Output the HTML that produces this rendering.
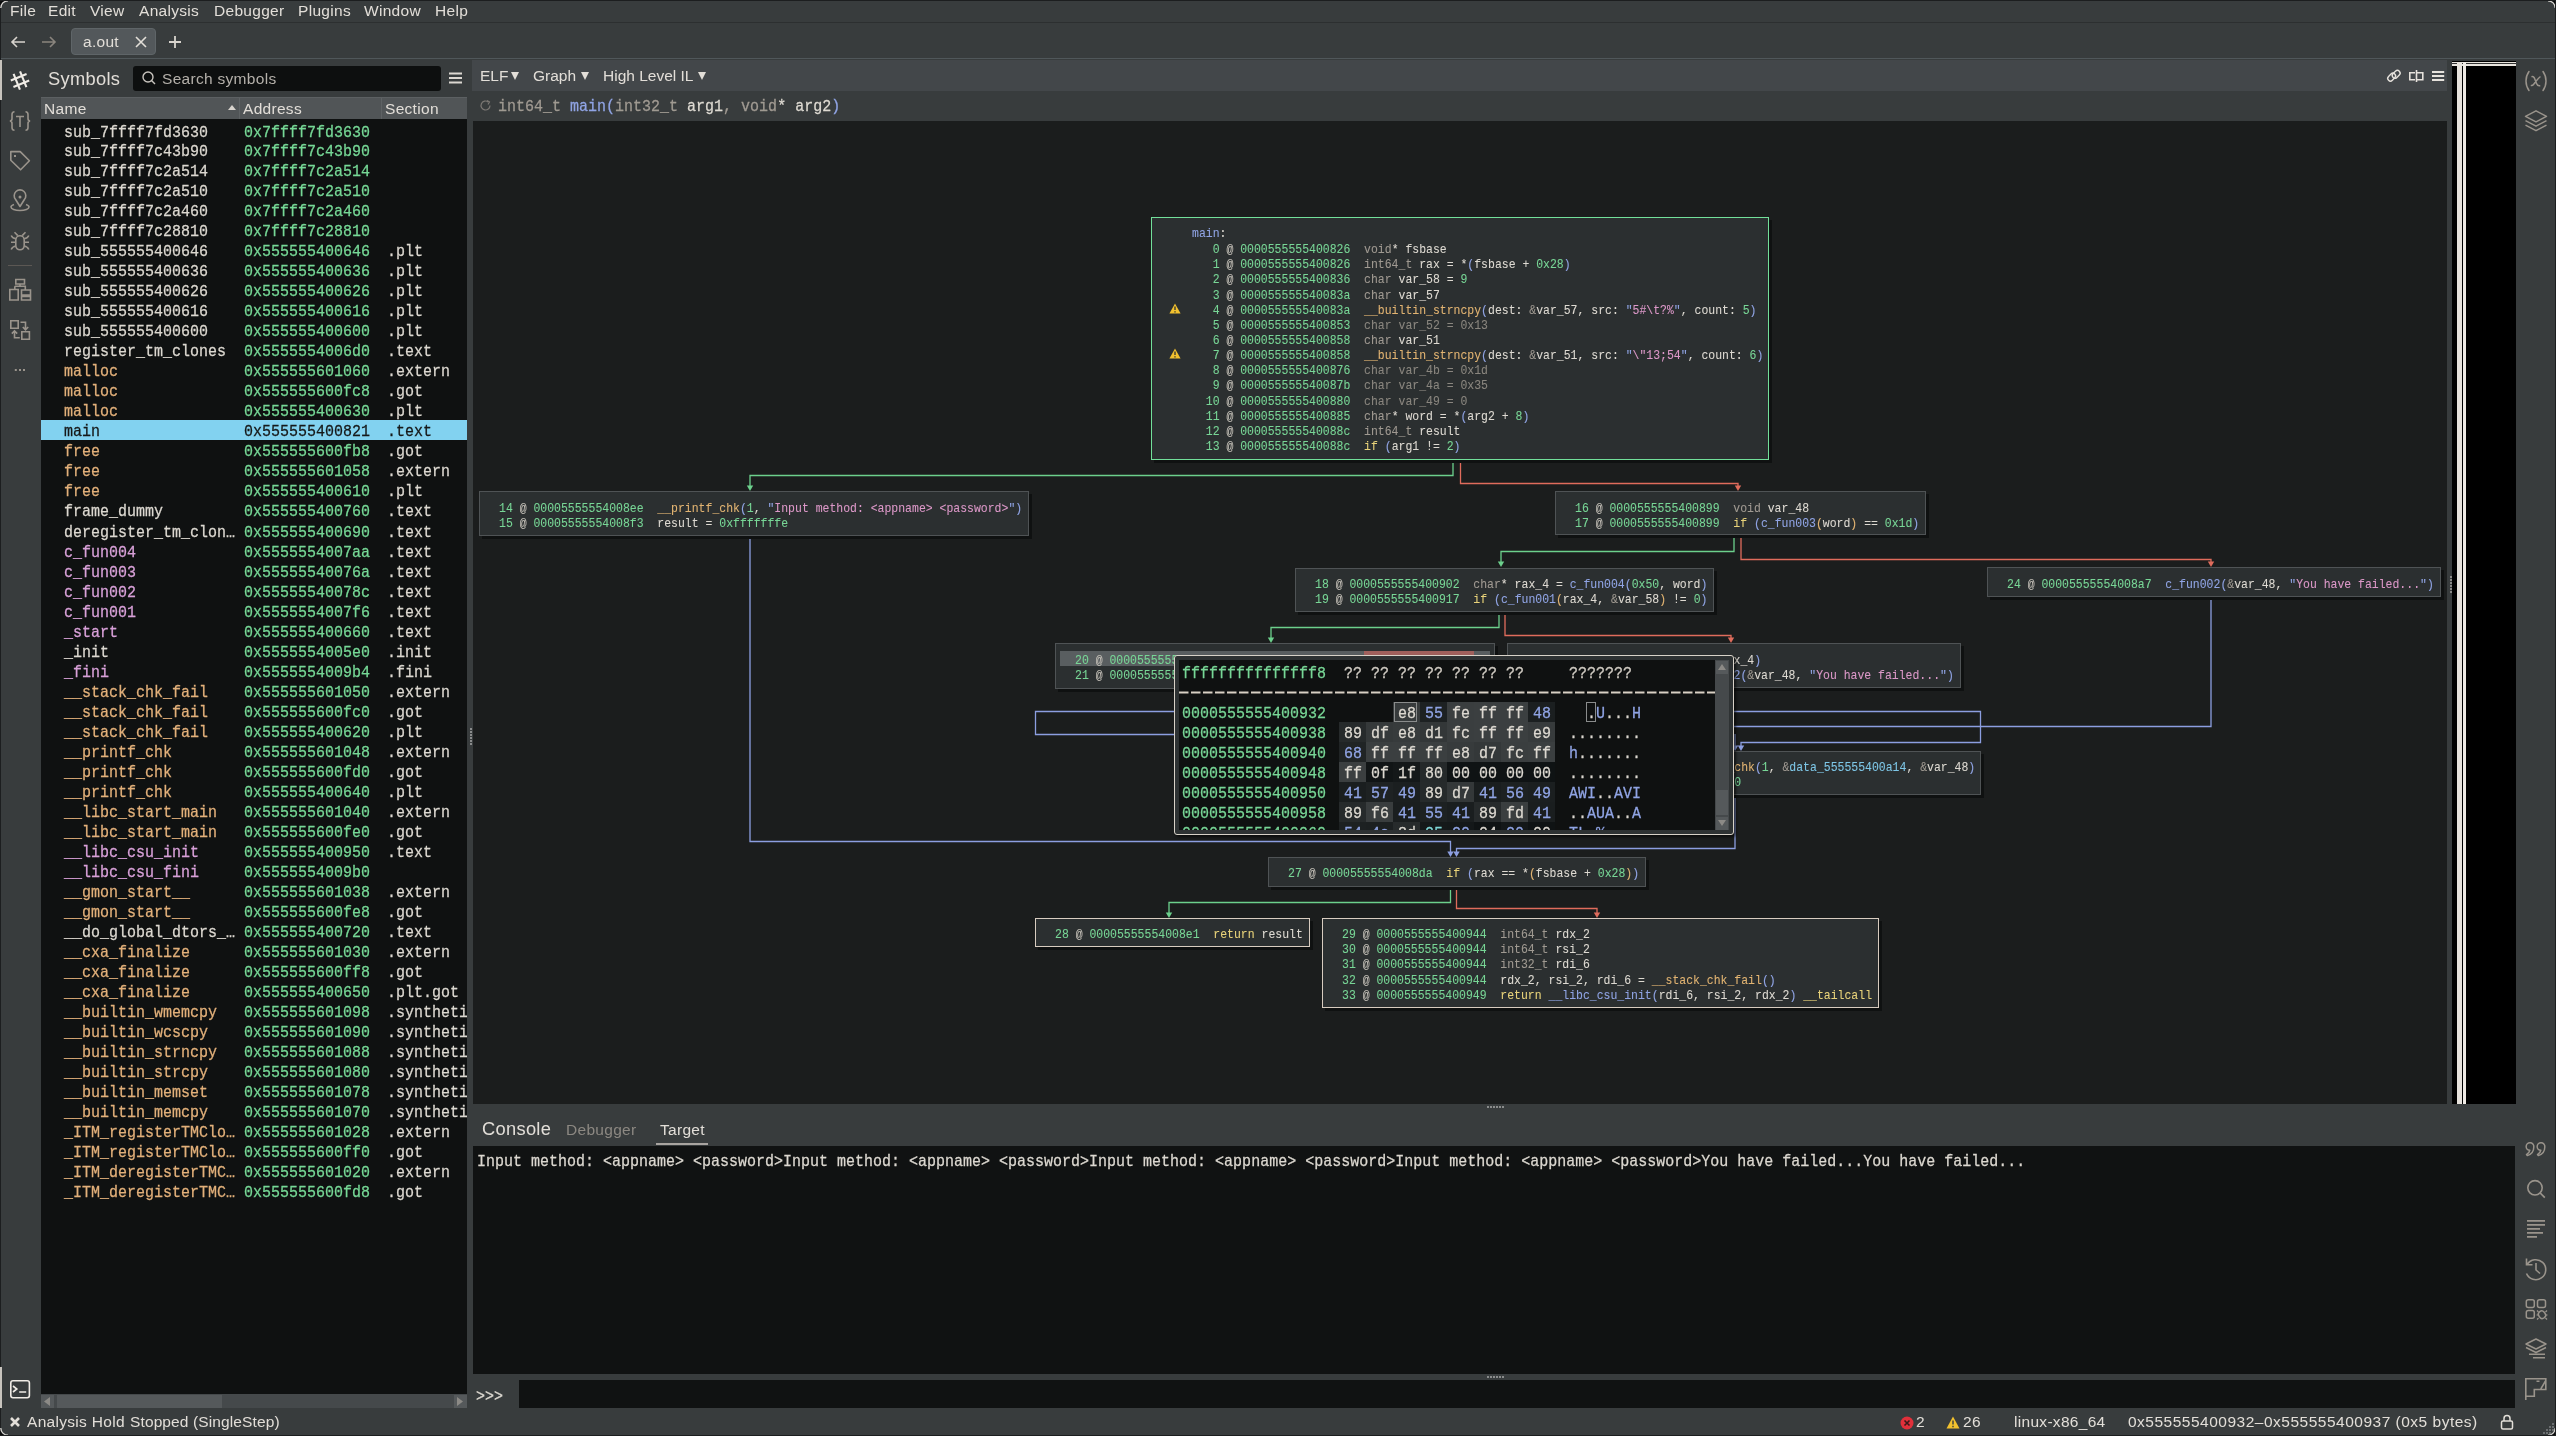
<!DOCTYPE html><html><head><meta charset="utf-8"><style>
*{box-sizing:border-box}
html,body{margin:0;padding:0;width:2556px;height:1436px;overflow:hidden;background:#0b0c0c}
.a{position:absolute}
.s{font-family:"Liberation Sans", sans-serif;white-space:pre}
.m{font-family:"Liberation Mono", monospace;white-space:pre}
#win{position:absolute;left:0;top:0;width:2556px;height:1436px;background:#383c3d;overflow:hidden}
.sym{position:absolute;left:0;width:426px;height:20px;line-height:25px;font-size:15px;font-family:"Liberation Mono", monospace;white-space:pre;color:#dcd8d0}
.sym span{position:absolute;top:0}
.blk{position:absolute;background:#2b2f30;border:1px solid #4f5355;box-shadow:3px 3px 0 #0f1111}
.gl{position:absolute;left:0;height:15.15px;line-height:15.15px;font-size:11.47px;font-family:"Liberation Mono", monospace;white-space:pre;color:#dedad2}
.n{color:#78d696} .at{color:#c4c0b8} .t{color:#a09a92} .f{color:#e2b472} .st{color:#dc98c8}
.k{color:#e8d27a}
body{will-change:transform} .s,.m,.sym,.gl{will-change:transform} .sym,.m{-webkit-text-stroke:0.25px currentColor} .gl{-webkit-text-stroke:0.08px currentColor} .sym span{transform:scaleY(1.1);transform-origin:0 11px} .m{transform:scaleY(1.1);transform-origin:0 9px} .gl{transform:scaleY(1.15);transform-origin:0 6.9px} .p{color:#90a4e4} .d{color:#8a867f} .c{color:#7ec6e6} .w{color:#dedad2}
</style></head><body><div id="win">
<div class="a s" style="left:10px;top:1px;font-size:15.5px;letter-spacing:0.3px;line-height:20px;color:#e2ded8">File</div>
<div class="a s" style="left:48px;top:1px;font-size:15.5px;letter-spacing:0.3px;line-height:20px;color:#e2ded8">Edit</div>
<div class="a s" style="left:90px;top:1px;font-size:15.5px;letter-spacing:0.3px;line-height:20px;color:#e2ded8">View</div>
<div class="a s" style="left:139px;top:1px;font-size:15.5px;letter-spacing:0.3px;line-height:20px;color:#e2ded8">Analysis</div>
<div class="a s" style="left:214px;top:1px;font-size:15.5px;letter-spacing:0.3px;line-height:20px;color:#e2ded8">Debugger</div>
<div class="a s" style="left:298px;top:1px;font-size:15.5px;letter-spacing:0.3px;line-height:20px;color:#e2ded8">Plugins</div>
<div class="a s" style="left:364px;top:1px;font-size:15.5px;letter-spacing:0.3px;line-height:20px;color:#e2ded8">Window</div>
<div class="a s" style="left:435px;top:1px;font-size:15.5px;letter-spacing:0.3px;line-height:20px;color:#e2ded8">Help</div>
<div class="a" style="left:0;top:22px;width:2556px;height:1px;background:#2c2f30"></div>
<svg class="a" style="left:9px;top:34px" width="18" height="16" viewBox="0 0 18 16"><path d="M16 8H3M8 3L3 8L8 13" stroke="#d8d4ce" stroke-width="1.6" fill="none"/></svg>
<svg class="a" style="left:40px;top:34px" width="18" height="16" viewBox="0 0 18 16"><path d="M2 8H15M10 3L15 8L10 13" stroke="#8a857e" stroke-width="1.6" fill="none"/></svg>
<div class="a" style="left:71px;top:28px;width:85px;height:27px;background:#53585b;border:1px solid #5f6568;border-radius:4px"></div>
<div class="a s" style="left:83px;top:32px;font-size:15.5px;letter-spacing:0.3px;line-height:20px;color:#e2ded8">a.out</div>
<svg class="a" style="left:134px;top:35px" width="14" height="14" viewBox="0 0 14 14"><path d="M2 2L12 12M12 2L2 12" stroke="#e2ded8" stroke-width="1.6"/></svg>
<svg class="a" style="left:168px;top:35px" width="14" height="14" viewBox="0 0 14 14"><path d="M7 1V13M1 7H13" stroke="#d8d4ce" stroke-width="1.8"/></svg>
<div class="a" style="left:0;top:58px;width:2556px;height:1px;background:#50575a"></div>
<div class="a" style="left:0;top:0;width:1px;height:1436px;background:#1c1e1f"></div>
<div class="a" style="left:0;top:60px;width:2px;height:40px;background:#c8c4be"></div>
<div class="a" style="left:0;top:1367px;width:2px;height:41px;background:#c8c4be"></div>
<svg class="a" style="left:0;top:0" width="40" height="1436"><g transform="rotate(-22 20 80.5)" stroke="#f0ece6" stroke-width="2.1" fill="none"><path d="M16.5 72V89M23.5 72V89M11.5 77H28.5M11.5 84H28.5"/></g><path d="M14.5 111.8C12.5 111.8 12 112.8 12 114.5V118.5C12 120 11.2 121 9.8 121C11.2 121 12 122 12 123.5V127.5C12 129.2 12.5 130.2 14.5 130.2M25.5 111.8C27.5 111.8 28 112.8 28 114.5V118.5C28 120 28.8 121 30.2 121C28.8 121 28 122 28 123.5V127.5C28 129.2 27.5 130.2 25.5 130.2M16 116.5H24M20 116.5V127" stroke="#9a948c" stroke-width="1.6" fill="none"/><path d="M10.8 151.6H20.2L29.4 160.8L20.6 169.8L10.8 160.2Z" stroke="#9a948c" stroke-width="1.6" fill="none" stroke-linejoin="round"/><rect x="14" y="155" width="2" height="2" fill="#9a948c"/><path d="M20 206.5L15.6 199.5A5.8 5.8 0 1 1 24.4 199.5Z" stroke="#9a948c" stroke-width="1.6" fill="none" stroke-linejoin="round"/><circle cx="20" cy="197" r="1.5" fill="#9a948c"/><path d="M14 204.5C11.5 205.3 11 206.2 11 207C11 209 15 210.5 20 210.5C25 210.5 29 209 29 207C29 206.2 28.5 205.3 26 204.5" stroke="#9a948c" stroke-width="1.6" fill="none"/><rect x="15.8" y="235.8" width="8.4" height="14" rx="4.2" stroke="#9a948c" stroke-width="1.6" fill="none"/><path d="M14.5 232.2L17.8 235.6M25.5 232.2L22.2 235.6M11.2 235.5C12 237.5 13.5 238.3 15.8 238.8M28.8 235.5C28 237.5 26.5 238.3 24.2 238.8M11 242.3H15.8M24.2 242.3H29M11.2 249.5C12 247.5 13.5 246.5 15.8 246M28.8 249.5C28 247.5 26.5 246.5 24.2 246" stroke="#9a948c" stroke-width="1.6" fill="none"/><path d="M8 265.5H32" stroke="#5c5854" stroke-width="1"/><path d="M15.8 279.5H24.5V284H15.8ZM20 284V286.3M14.8 286.3H25.3V289.5M14.8 286.3V289.5M9.8 289.5H18.2V300H9.8ZM21.5 290H30.5V295H21.5ZM21.5 296.5H30.5V300H21.5Z" stroke="#9a948c" stroke-width="1.6" fill="none"/><path d="M10.8 320.8H18.2V328.2H10.8ZM21.8 331.8H29.4V339.2H21.8ZM20.5 322.3H25.5V329M22.8 327L25.5 329.8L28.2 327M19.8 337.8H14.5V331.5M11.8 333.6L14.5 330.8L17.2 333.6" stroke="#9a948c" stroke-width="1.6" fill="none"/><rect x="14.8" y="369" width="2" height="2" fill="#9a948c"/><rect x="19" y="369" width="2" height="2" fill="#9a948c"/><rect x="23" y="369" width="2" height="2" fill="#9a948c"/><rect x="10.8" y="1380.8" width="18.6" height="17" rx="2.2" stroke="#f0ece6" stroke-width="1.6" fill="none"/><path d="M13 1386L16.8 1389L13 1392M19.2 1392H26.2" stroke="#f0ece6" stroke-width="1.6" fill="none"/></svg>
<div class="a s" style="left:48px;top:68px;font-size:18.3px;letter-spacing:0.3px;line-height:22px;color:#e2ded8">Symbols</div>
<div class="a" style="left:133px;top:66px;width:308px;height:25px;background:#0d0f0f;border-radius:3px"></div>
<svg class="a" style="left:141px;top:70px" width="16" height="16" viewBox="0 0 16 16"><circle cx="7" cy="7" r="5" stroke="#c8c4be" stroke-width="1.4" fill="none"/><path d="M10.5 10.5L14 14" stroke="#c8c4be" stroke-width="1.4"/></svg>
<div class="a s" style="left:162px;top:69px;font-size:15.5px;letter-spacing:0.3px;line-height:20px;color:#b4b0aa">Search symbols</div>
<svg class="a" style="left:449px;top:72px" width="13" height="12" viewBox="0 0 13 12"><path d="M0 1.5H13M0 6H13M0 10.5H13" stroke="#dcd8d2" stroke-width="1.8"/></svg>
<div class="a" style="left:41px;top:97px;width:426px;height:22px;background:#515557;border-top:1px solid #5c6062"></div>
<div class="a s" style="left:44px;top:99px;font-size:15.5px;letter-spacing:0.3px;line-height:20px;color:#e2ded8">Name</div>
<svg class="a" style="left:228px;top:105px" width="8" height="5" viewBox="0 0 8 5"><path d="M0 5L4 0L8 5Z" fill="#d8d4ce"/></svg>
<div class="a" style="left:239px;top:98px;width:1px;height:21px;background:#5e6264"></div>
<div class="a s" style="left:243px;top:99px;font-size:15.5px;letter-spacing:0.3px;line-height:20px;color:#e2ded8">Address</div>
<div class="a" style="left:381px;top:98px;width:1px;height:21px;background:#5e6264"></div>
<div class="a s" style="left:385px;top:99px;font-size:15.5px;letter-spacing:0.3px;line-height:20px;color:#e2ded8">Section</div>
<div class="a" style="left:41px;top:119px;width:426px;height:1275px;background:#0f1111;overflow:hidden">
<div class="sym" style="top:1px"><span style="left:23px;color:#dcd8d0">sub_7ffff7fd3630</span><span style="left:203px;color:#76d896">0x7ffff7fd3630</span><span style="left:346px"></span></div>
<div class="sym" style="top:21px"><span style="left:23px;color:#dcd8d0">sub_7ffff7c43b90</span><span style="left:203px;color:#76d896">0x7ffff7c43b90</span><span style="left:346px"></span></div>
<div class="sym" style="top:41px"><span style="left:23px;color:#dcd8d0">sub_7ffff7c2a514</span><span style="left:203px;color:#76d896">0x7ffff7c2a514</span><span style="left:346px"></span></div>
<div class="sym" style="top:61px"><span style="left:23px;color:#dcd8d0">sub_7ffff7c2a510</span><span style="left:203px;color:#76d896">0x7ffff7c2a510</span><span style="left:346px"></span></div>
<div class="sym" style="top:81px"><span style="left:23px;color:#dcd8d0">sub_7ffff7c2a460</span><span style="left:203px;color:#76d896">0x7ffff7c2a460</span><span style="left:346px"></span></div>
<div class="sym" style="top:101px"><span style="left:23px;color:#dcd8d0">sub_7ffff7c28810</span><span style="left:203px;color:#76d896">0x7ffff7c28810</span><span style="left:346px"></span></div>
<div class="sym" style="top:121px"><span style="left:23px;color:#dcd8d0">sub_555555400646</span><span style="left:203px;color:#76d896">0x555555400646</span><span style="left:346px">.plt</span></div>
<div class="sym" style="top:141px"><span style="left:23px;color:#dcd8d0">sub_555555400636</span><span style="left:203px;color:#76d896">0x555555400636</span><span style="left:346px">.plt</span></div>
<div class="sym" style="top:161px"><span style="left:23px;color:#dcd8d0">sub_555555400626</span><span style="left:203px;color:#76d896">0x555555400626</span><span style="left:346px">.plt</span></div>
<div class="sym" style="top:181px"><span style="left:23px;color:#dcd8d0">sub_555555400616</span><span style="left:203px;color:#76d896">0x555555400616</span><span style="left:346px">.plt</span></div>
<div class="sym" style="top:201px"><span style="left:23px;color:#dcd8d0">sub_555555400600</span><span style="left:203px;color:#76d896">0x555555400600</span><span style="left:346px">.plt</span></div>
<div class="sym" style="top:221px"><span style="left:23px;color:#dcd8d0">register_tm_clones</span><span style="left:203px;color:#76d896">0x5555554006d0</span><span style="left:346px">.text</span></div>
<div class="sym" style="top:241px"><span style="left:23px;color:#e2b07a">malloc</span><span style="left:203px;color:#76d896">0x555555601060</span><span style="left:346px">.extern</span></div>
<div class="sym" style="top:261px"><span style="left:23px;color:#e2b07a">malloc</span><span style="left:203px;color:#76d896">0x555555600fc8</span><span style="left:346px">.got</span></div>
<div class="sym" style="top:281px"><span style="left:23px;color:#e2b07a">malloc</span><span style="left:203px;color:#76d896">0x555555400630</span><span style="left:346px">.plt</span></div>
<div class="sym" style="top:301px;background:#82d2f0;color:#161818"><span style="left:23px">main</span><span style="left:203px">0x555555400821</span><span style="left:346px">.text</span></div>
<div class="sym" style="top:321px"><span style="left:23px;color:#e2b07a">free</span><span style="left:203px;color:#76d896">0x555555600fb8</span><span style="left:346px">.got</span></div>
<div class="sym" style="top:341px"><span style="left:23px;color:#e2b07a">free</span><span style="left:203px;color:#76d896">0x555555601058</span><span style="left:346px">.extern</span></div>
<div class="sym" style="top:361px"><span style="left:23px;color:#e2b07a">free</span><span style="left:203px;color:#76d896">0x555555400610</span><span style="left:346px">.plt</span></div>
<div class="sym" style="top:381px"><span style="left:23px;color:#dcd8d0">frame_dummy</span><span style="left:203px;color:#76d896">0x555555400760</span><span style="left:346px">.text</span></div>
<div class="sym" style="top:401px"><span style="left:23px;color:#dcd8d0">deregister_tm_clon…</span><span style="left:203px;color:#76d896">0x555555400690</span><span style="left:346px">.text</span></div>
<div class="sym" style="top:421px"><span style="left:23px;color:#d8a0d8">c_fun004</span><span style="left:203px;color:#76d896">0x5555554007aa</span><span style="left:346px">.text</span></div>
<div class="sym" style="top:441px"><span style="left:23px;color:#d8a0d8">c_fun003</span><span style="left:203px;color:#76d896">0x55555540076a</span><span style="left:346px">.text</span></div>
<div class="sym" style="top:461px"><span style="left:23px;color:#d8a0d8">c_fun002</span><span style="left:203px;color:#76d896">0x55555540078c</span><span style="left:346px">.text</span></div>
<div class="sym" style="top:481px"><span style="left:23px;color:#d8a0d8">c_fun001</span><span style="left:203px;color:#76d896">0x5555554007f6</span><span style="left:346px">.text</span></div>
<div class="sym" style="top:501px"><span style="left:23px;color:#d8a0d8">_start</span><span style="left:203px;color:#76d896">0x555555400660</span><span style="left:346px">.text</span></div>
<div class="sym" style="top:521px"><span style="left:23px;color:#dcd8d0">_init</span><span style="left:203px;color:#76d896">0x5555554005e0</span><span style="left:346px">.init</span></div>
<div class="sym" style="top:541px"><span style="left:23px;color:#d8a0d8">_fini</span><span style="left:203px;color:#76d896">0x5555554009b4</span><span style="left:346px">.fini</span></div>
<div class="sym" style="top:561px"><span style="left:23px;color:#e2b07a">__stack_chk_fail</span><span style="left:203px;color:#76d896">0x555555601050</span><span style="left:346px">.extern</span></div>
<div class="sym" style="top:581px"><span style="left:23px;color:#e2b07a">__stack_chk_fail</span><span style="left:203px;color:#76d896">0x555555600fc0</span><span style="left:346px">.got</span></div>
<div class="sym" style="top:601px"><span style="left:23px;color:#e2b07a">__stack_chk_fail</span><span style="left:203px;color:#76d896">0x555555400620</span><span style="left:346px">.plt</span></div>
<div class="sym" style="top:621px"><span style="left:23px;color:#e2b07a">__printf_chk</span><span style="left:203px;color:#76d896">0x555555601048</span><span style="left:346px">.extern</span></div>
<div class="sym" style="top:641px"><span style="left:23px;color:#e2b07a">__printf_chk</span><span style="left:203px;color:#76d896">0x555555600fd0</span><span style="left:346px">.got</span></div>
<div class="sym" style="top:661px"><span style="left:23px;color:#e2b07a">__printf_chk</span><span style="left:203px;color:#76d896">0x555555400640</span><span style="left:346px">.plt</span></div>
<div class="sym" style="top:681px"><span style="left:23px;color:#e2b07a">__libc_start_main</span><span style="left:203px;color:#76d896">0x555555601040</span><span style="left:346px">.extern</span></div>
<div class="sym" style="top:701px"><span style="left:23px;color:#e2b07a">__libc_start_main</span><span style="left:203px;color:#76d896">0x555555600fe0</span><span style="left:346px">.got</span></div>
<div class="sym" style="top:721px"><span style="left:23px;color:#d8a0d8">__libc_csu_init</span><span style="left:203px;color:#76d896">0x555555400950</span><span style="left:346px">.text</span></div>
<div class="sym" style="top:741px"><span style="left:23px;color:#d8a0d8">__libc_csu_fini</span><span style="left:203px;color:#76d896">0x5555554009b0</span><span style="left:346px"></span></div>
<div class="sym" style="top:761px"><span style="left:23px;color:#e2b07a">__gmon_start__</span><span style="left:203px;color:#76d896">0x555555601038</span><span style="left:346px">.extern</span></div>
<div class="sym" style="top:781px"><span style="left:23px;color:#e2b07a">__gmon_start__</span><span style="left:203px;color:#76d896">0x555555600fe8</span><span style="left:346px">.got</span></div>
<div class="sym" style="top:801px"><span style="left:23px;color:#dcd8d0">__do_global_dtors_…</span><span style="left:203px;color:#76d896">0x555555400720</span><span style="left:346px">.text</span></div>
<div class="sym" style="top:821px"><span style="left:23px;color:#e2b07a">__cxa_finalize</span><span style="left:203px;color:#76d896">0x555555601030</span><span style="left:346px">.extern</span></div>
<div class="sym" style="top:841px"><span style="left:23px;color:#e2b07a">__cxa_finalize</span><span style="left:203px;color:#76d896">0x555555600ff8</span><span style="left:346px">.got</span></div>
<div class="sym" style="top:861px"><span style="left:23px;color:#e2b07a">__cxa_finalize</span><span style="left:203px;color:#76d896">0x555555400650</span><span style="left:346px">.plt.got</span></div>
<div class="sym" style="top:881px"><span style="left:23px;color:#e2b07a">__builtin_wmemcpy</span><span style="left:203px;color:#76d896">0x555555601098</span><span style="left:346px">.syntheti</span></div>
<div class="sym" style="top:901px"><span style="left:23px;color:#e2b07a">__builtin_wcscpy</span><span style="left:203px;color:#76d896">0x555555601090</span><span style="left:346px">.syntheti</span></div>
<div class="sym" style="top:921px"><span style="left:23px;color:#e2b07a">__builtin_strncpy</span><span style="left:203px;color:#76d896">0x555555601088</span><span style="left:346px">.syntheti</span></div>
<div class="sym" style="top:941px"><span style="left:23px;color:#e2b07a">__builtin_strcpy</span><span style="left:203px;color:#76d896">0x555555601080</span><span style="left:346px">.syntheti</span></div>
<div class="sym" style="top:961px"><span style="left:23px;color:#e2b07a">__builtin_memset</span><span style="left:203px;color:#76d896">0x555555601078</span><span style="left:346px">.syntheti</span></div>
<div class="sym" style="top:981px"><span style="left:23px;color:#e2b07a">__builtin_memcpy</span><span style="left:203px;color:#76d896">0x555555601070</span><span style="left:346px">.syntheti</span></div>
<div class="sym" style="top:1001px"><span style="left:23px;color:#e2b07a">_ITM_registerTMClo…</span><span style="left:203px;color:#76d896">0x555555601028</span><span style="left:346px">.extern</span></div>
<div class="sym" style="top:1021px"><span style="left:23px;color:#e2b07a">_ITM_registerTMClo…</span><span style="left:203px;color:#76d896">0x555555600ff0</span><span style="left:346px">.got</span></div>
<div class="sym" style="top:1041px"><span style="left:23px;color:#e2b07a">_ITM_deregisterTMC…</span><span style="left:203px;color:#76d896">0x555555601020</span><span style="left:346px">.extern</span></div>
<div class="sym" style="top:1061px"><span style="left:23px;color:#e2b07a">_ITM_deregisterTMC…</span><span style="left:203px;color:#76d896">0x555555600fd8</span><span style="left:346px">.got</span></div>
</div>
<div class="a" style="left:41px;top:1394px;width:426px;height:14px;background:#45494b"></div>
<div class="a" style="left:41px;top:1395px;width:13px;height:13px;background:#55595b"></div>
<svg class="a" style="left:44px;top:1397px" width="7" height="9" viewBox="0 0 7 9"><path d="M6 0L0 4.5L6 9Z" fill="#8c8a86"/></svg>
<div class="a" style="left:57px;top:1395px;width:165px;height:13px;background:#55595b"></div>
<div class="a" style="left:454px;top:1395px;width:13px;height:13px;background:#55595b"></div>
<svg class="a" style="left:457px;top:1397px" width="7" height="9" viewBox="0 0 7 9"><path d="M0 0L6 4.5L0 9Z" fill="#8c8a86"/></svg>
<div class="a" style="left:472px;top:60px;width:1976px;height:31px;background:#43474a"></div>
<div class="a s" style="left:480px;top:66px;font-size:15.5px;letter-spacing:0px;line-height:20px;color:#e2ded8">ELF</div>
<div class="a s" style="left:533px;top:66px;font-size:15.5px;letter-spacing:0px;line-height:20px;color:#e2ded8">Graph</div>
<div class="a s" style="left:603px;top:66px;font-size:15.5px;letter-spacing:0px;line-height:20px;color:#e2ded8">High Level IL</div>
<svg class="a" style="left:511px;top:72px" width="8" height="8" viewBox="0 0 8 8"><path d="M0 0H8L4 8Z" fill="#e2ded8"/></svg>
<svg class="a" style="left:581px;top:72px" width="8" height="8" viewBox="0 0 8 8"><path d="M0 0H8L4 8Z" fill="#e2ded8"/></svg>
<svg class="a" style="left:698px;top:72px" width="8" height="8" viewBox="0 0 8 8"><path d="M0 0H8L4 8Z" fill="#e2ded8"/></svg>
<svg class="a" style="left:0;top:0" width="2556" height="100"><g transform="rotate(-45 2394 75.8)" stroke="#e6e2dc" stroke-width="1.4" fill="none"><rect x="2387" y="72.4" width="8.8" height="5.4" rx="2.7"/><rect x="2392.2" y="73.6" width="8.8" height="5.4" rx="2.7"/></g><path d="M2415 72.8H2409.8V79.8H2415M2416.5 72.8H2422.8V79.8H2416.5M2416.5 70V82" stroke="#e6e2dc" stroke-width="1.6" fill="none"/><path d="M2432 72H2444.2M2432 76H2444.2M2432 80H2444.2" stroke="#e6e2dc" stroke-width="1.9"/></svg>
<svg class="a" style="left:479px;top:99px" width="13" height="13" viewBox="0 0 13 13"><path d="M11 6.5A4.5 4.5 0 1 1 9.2 2.9" stroke="#7c7874" stroke-width="1.2" fill="none"/><path d="M8 1.5L10.5 3L9 5.5" stroke="#7c7874" stroke-width="1.2" fill="none"/></svg>
<div class="a m" style="left:498px;top:97.5px;font-size:15px;line-height:20px;color:#dedad2"><span class="t">int64_t</span> <span class="p">main(</span><span class="t">int32_t</span> arg1<span class="t">,</span> <span class="t">void</span>* arg2<span class="p">)</span></div>
<div class="a" style="left:473px;top:121px;width:1974px;height:983px;background:#1b1d1d"></div>
<svg class="a" style="left:0;top:0" width="2556" height="1436"><path d="M1453 460 L1453 475.5 L750 475.5 L750 489" stroke="#6cd08c" stroke-width="1.3" fill="none"/><path d="M746.8 485.5 L753.2 485.5 L750 491 Z" fill="#6cd08c"/><path d="M1460.5 460 L1460.5 483.5 L1738 483.5 L1738 489" stroke="#e06c5c" stroke-width="1.3" fill="none"/><path d="M1734.8 485.5 L1741.2 485.5 L1738 491 Z" fill="#e06c5c"/><path d="M1734 536 L1734 551.5 L1501 551.5 L1501 565" stroke="#6cd08c" stroke-width="1.3" fill="none"/><path d="M1497.8 561.5 L1504.2 561.5 L1501 567 Z" fill="#6cd08c"/><path d="M1741 536 L1741 559.5 L2211 559.5 L2211 565" stroke="#e06c5c" stroke-width="1.3" fill="none"/><path d="M2207.8 561.5 L2214.2 561.5 L2211 567 Z" fill="#e06c5c"/><path d="M1499 612 L1499 627.5 L1271 627.5 L1271 641" stroke="#6cd08c" stroke-width="1.3" fill="none"/><path d="M1267.8 637.5 L1274.2 637.5 L1271 643 Z" fill="#6cd08c"/><path d="M1505 612 L1505 635.5 L1731 635.5 L1731 641" stroke="#e06c5c" stroke-width="1.3" fill="none"/><path d="M1727.8 637.5 L1734.2 637.5 L1731 643 Z" fill="#e06c5c"/><path d="M750 536 L750 841.5 L1450.5 841.5 L1450.5 855" stroke="#8c9ee0" stroke-width="1.3" fill="none"/><path d="M1447.3 851.5 L1453.7 851.5 L1450.5 857 Z" fill="#8c9ee0"/><path d="M1735 795 L1735 848.5 L1456.5 848.5 L1456.5 855" stroke="#8c9ee0" stroke-width="1.3" fill="none"/><path d="M1453.3 851.5 L1459.7 851.5 L1456.5 857 Z" fill="#8c9ee0"/><path d="M2211 597 L2211 726.5 L1700 726.5" stroke="#8c9ee0" stroke-width="1.3" fill="none"/><path d="M1700 711.5 L1980.5 711.5 L1980.5 742.5 L1741 742.5 L1741 749" stroke="#8c9ee0" stroke-width="1.3" fill="none"/><path d="M1737.8 745.5 L1744.2 745.5 L1741 751 Z" fill="#8c9ee0"/><path d="M1735 734 L1735 749" stroke="#8c9ee0" stroke-width="1.3" fill="none"/><path d="M1731.8 745.5 L1738.2 745.5 L1735 751 Z" fill="#8c9ee0"/><path d="M1200 711.5 L1035.5 711.5 L1035.5 734.5 L1200 734.5" stroke="#8c9ee0" stroke-width="1.3" fill="none"/><path d="M1450 689 L1450 700" stroke="#8c9ee0" stroke-width="1.3" fill="none"/><path d="M1450.5 887 L1450.5 902.5 L1169 902.5 L1169 916" stroke="#6cd08c" stroke-width="1.3" fill="none"/><path d="M1165.8 912.5 L1172.2 912.5 L1169 918 Z" fill="#6cd08c"/><path d="M1456.5 887 L1456.5 908.5 L1597 908.5 L1597 916" stroke="#e06c5c" stroke-width="1.3" fill="none"/><path d="M1593.8 912.5 L1600.2 912.5 L1597 918 Z" fill="#e06c5c"/></svg>
<div class="blk" style="left:1151px;top:217px;width:618px;height:243px;border-color:#72e09a"></div>
<div class="gl" style="left:1192.3px;top:225.10px"><span class="p">main</span>:</div>
<div class="gl" style="left:1192.3px;top:241.10px">  <span class="n"> 0</span> <span class="at">@</span> <span class="n">0000555555400826</span>  <span class="t">void</span>* fsbase</div>
<div class="gl" style="left:1192.3px;top:256.25px">  <span class="n"> 1</span> <span class="at">@</span> <span class="n">0000555555400826</span>  <span class="t">int64_t</span> rax = *<span class="p">(</span>fsbase + <span class="n">0x28</span><span class="p">)</span></div>
<div class="gl" style="left:1192.3px;top:271.40px">  <span class="n"> 2</span> <span class="at">@</span> <span class="n">0000555555400836</span>  <span class="t">char</span> var_58 = <span class="n">9</span></div>
<div class="gl" style="left:1192.3px;top:286.55px">  <span class="n"> 3</span> <span class="at">@</span> <span class="n">000055555540083a</span>  <span class="t">char</span> var_57</div>
<div class="gl" style="left:1192.3px;top:301.70px">  <span class="n"> 4</span> <span class="at">@</span> <span class="n">000055555540083a</span>  <span class="f">__builtin_strncpy</span><span class="p">(</span>dest: <span class="t">&amp;</span>var_57, src: <span class="p">"</span><span class="st">5#\t?%</span><span class="p">"</span>, count: <span class="n">5</span><span class="p">)</span></div>
<div class="gl" style="left:1192.3px;top:316.85px">  <span class="n"> 5</span> <span class="at">@</span> <span class="n">0000555555400853</span>  <span class="d">char var_52 = 0x13</span></div>
<div class="gl" style="left:1192.3px;top:332.00px">  <span class="n"> 6</span> <span class="at">@</span> <span class="n">0000555555400858</span>  <span class="t">char</span> var_51</div>
<div class="gl" style="left:1192.3px;top:347.15px">  <span class="n"> 7</span> <span class="at">@</span> <span class="n">0000555555400858</span>  <span class="f">__builtin_strncpy</span><span class="p">(</span>dest: <span class="t">&amp;</span>var_51, src: <span class="p">"</span><span class="st">\"13;54</span><span class="p">"</span>, count: <span class="n">6</span><span class="p">)</span></div>
<div class="gl" style="left:1192.3px;top:362.30px">  <span class="n"> 8</span> <span class="at">@</span> <span class="n">0000555555400876</span>  <span class="d">char var_4b = 0x1d</span></div>
<div class="gl" style="left:1192.3px;top:377.45px">  <span class="n"> 9</span> <span class="at">@</span> <span class="n">000055555540087b</span>  <span class="d">char var_4a = 0x35</span></div>
<div class="gl" style="left:1192.3px;top:392.60px">  <span class="n">10</span> <span class="at">@</span> <span class="n">0000555555400880</span>  <span class="d">char var_49 = 0</span></div>
<div class="gl" style="left:1192.3px;top:407.75px">  <span class="n">11</span> <span class="at">@</span> <span class="n">0000555555400885</span>  <span class="t">char</span>* word = *<span class="p">(</span>arg2 + <span class="n">8</span><span class="p">)</span></div>
<div class="gl" style="left:1192.3px;top:422.90px">  <span class="n">12</span> <span class="at">@</span> <span class="n">000055555540088c</span>  <span class="t">int64_t</span> result</div>
<div class="gl" style="left:1192.3px;top:438.05px">  <span class="n">13</span> <span class="at">@</span> <span class="n">000055555540088c</span>  <span class="k">if</span> <span class="p">(</span>arg1 != <span class="n">2</span><span class="p">)</span></div>
<svg class="a" style="left:1169px;top:302.6px" width="12" height="11" viewBox="0 0 12 11"><path d="M6 0.5L11.6 10.5H0.4Z" fill="#f2c12e"/><path d="M6 3.5V7M6 8.3V9.6" stroke="#2b2f30" stroke-width="1.3"/></svg>
<svg class="a" style="left:1169px;top:348.1px" width="12" height="11" viewBox="0 0 12 11"><path d="M6 0.5L11.6 10.5H0.4Z" fill="#f2c12e"/><path d="M6 3.5V7M6 8.3V9.6" stroke="#2b2f30" stroke-width="1.3"/></svg>
<div class="blk" style="left:479px;top:491px;width:550px;height:45px;border-color:#4f5355"></div>
<div class="gl" style="left:499px;top:500.10px"><span class="n">14</span> <span class="at">@</span> <span class="n">00005555554008ee</span>  <span class="f">__printf_chk</span><span class="p">(</span><span class="n">1</span>, <span class="p">"</span><span class="st">Input method: &lt;appname&gt; &lt;password&gt;</span><span class="p">"</span><span class="p">)</span></div>
<div class="gl" style="left:499px;top:515.25px"><span class="n">15</span> <span class="at">@</span> <span class="n">00005555554008f3</span>  result = <span class="n">0xfffffffe</span></div>
<div class="blk" style="left:1555px;top:491px;width:371px;height:44px;border-color:#4f5355"></div>
<div class="gl" style="left:1575px;top:500.10px"><span class="n">16</span> <span class="at">@</span> <span class="n">0000555555400899</span>  <span class="t">void</span> var_48</div>
<div class="gl" style="left:1575px;top:515.25px"><span class="n">17</span> <span class="at">@</span> <span class="n">0000555555400899</span>  <span class="k">if</span> <span class="p">(</span><span class="p">c_fun003</span><span class="f">(</span>word<span class="f">)</span> == <span class="n">0x1d</span><span class="p">)</span></div>
<div class="blk" style="left:1295px;top:568px;width:419px;height:44px;border-color:#4f5355"></div>
<div class="gl" style="left:1315px;top:576.10px"><span class="n">18</span> <span class="at">@</span> <span class="n">0000555555400902</span>  <span class="t">char</span>* rax_4 = <span class="p">c_fun004(</span><span class="n">0x50</span>, word<span class="p">)</span></div>
<div class="gl" style="left:1315px;top:591.25px"><span class="n">19</span> <span class="at">@</span> <span class="n">0000555555400917</span>  <span class="k">if</span> <span class="p">(</span><span class="p">c_fun001</span><span class="f">(</span>rax_4, <span class="t">&amp;</span>var_58<span class="f">)</span> != <span class="n">0</span><span class="p">)</span></div>
<div class="blk" style="left:1987px;top:567px;width:454px;height:30px;border-color:#4f5355"></div>
<div class="gl" style="left:2007px;top:576.10px"><span class="n">24</span> <span class="at">@</span> <span class="n">00005555554008a7</span>  <span class="p">c_fun002(</span><span class="t">&amp;</span>var_48, <span class="p">"</span><span class="st">You have failed...</span><span class="p">"</span><span class="p">)</span></div>
<div class="blk" style="left:1055px;top:643px;width:440px;height:46px;border-color:#4f5355"></div>
<div class="a" style="left:1060px;top:650.8px;width:430px;height:15px;background:#595e60"></div>
<div class="a" style="left:1364px;top:650.8px;width:110px;height:15px;background:#a0605c"></div>
<div class="gl" style="left:1075px;top:652.10px"><span class="n">20</span> <span class="at">@</span> <span class="n">0000555555400932</span>  <span class="p">c_fun002(</span><span class="t">&amp;</span>var_48, <span class="p">"</span><span class="st">You have won...</span><span class="p">"</span><span class="p">)</span></div>
<div class="gl" style="left:1075px;top:667.25px"><span class="n">21</span> <span class="at">@</span> <span class="n">0000555555400937</span>  result = <span class="n">0</span></div>
<div class="blk" style="left:1507px;top:643px;width:454px;height:45px;border-color:#4f5355"></div>
<div class="gl" style="left:1527px;top:652.10px"><span class="n">22</span> <span class="at">@</span> <span class="n">0000555555400923</span>  <span class="f">free</span><span class="p">(</span>rax_4<span class="p">)</span></div>
<div class="gl" style="left:1527px;top:667.25px"><span class="n">23</span> <span class="at">@</span> <span class="n">0000555555400928</span>  <span class="p">c_fun002(</span><span class="t">&amp;</span>var_48, <span class="p">"</span><span class="st">You have failed...</span><span class="p">"</span><span class="p">)</span></div>
<div class="blk" style="left:1494px;top:751px;width:487px;height:44px;border-color:#4f5355"></div>
<div class="gl" style="left:1514px;top:759.10px"><span class="n">25</span> <span class="at">@</span> <span class="n">00005555554008c3</span>  <span class="f">__printf_chk</span><span class="p">(</span><span class="n">1</span>, <span class="t">&amp;</span><span class="c">data_555555400a14</span>, <span class="t">&amp;</span>var_48<span class="p">)</span></div>
<div class="gl" style="left:1514px;top:774.25px"><span class="n">26</span> <span class="at">@</span> <span class="n">00005555554008c8</span>  result = <span class="n">0</span></div>
<div class="blk" style="left:1268px;top:857px;width:378px;height:30px;border-color:#4f5355"></div>
<div class="gl" style="left:1288px;top:865.10px"><span class="n">27</span> <span class="at">@</span> <span class="n">00005555554008da</span>  <span class="k">if</span> <span class="p">(</span>rax == *<span class="f">(</span>fsbase + <span class="n">0x28</span><span class="f">)</span><span class="p">)</span></div>
<div class="blk" style="left:1035px;top:918px;width:275px;height:29px;border-color:#d8ccc0"></div>
<div class="gl" style="left:1055px;top:926.10px"><span class="n">28</span> <span class="at">@</span> <span class="n">00005555554008e1</span>  <span class="k">return</span> result</div>
<div class="blk" style="left:1322px;top:918px;width:557px;height:90px;border-color:#d8ccc0"></div>
<div class="gl" style="left:1342px;top:926.10px"><span class="n">29</span> <span class="at">@</span> <span class="n">0000555555400944</span>  <span class="t">int64_t</span> rdx_2</div>
<div class="gl" style="left:1342px;top:941.25px"><span class="n">30</span> <span class="at">@</span> <span class="n">0000555555400944</span>  <span class="t">int64_t</span> rsi_2</div>
<div class="gl" style="left:1342px;top:956.40px"><span class="n">31</span> <span class="at">@</span> <span class="n">0000555555400944</span>  <span class="t">int32_t</span> rdi_6</div>
<div class="gl" style="left:1342px;top:971.55px"><span class="n">32</span> <span class="at">@</span> <span class="n">0000555555400944</span>  rdx_2, rsi_2, rdi_6 = <span class="f">__stack_chk_fail</span><span class="p">()</span></div>
<div class="gl" style="left:1342px;top:986.70px"><span class="n">33</span> <span class="at">@</span> <span class="n">0000555555400949</span>  <span class="k">return</span> <span class="p">__libc_csu_init(</span>rdi_6, rsi_2, rdx_2<span class="p">)</span> <span class="k">__tailcall</span></div>
<div class="a" style="left:1174px;top:655px;width:560px;height:180px;background:#2e3233;border:1px solid #d8d2c8;border-radius:3px;box-shadow:2px 2px 3px rgba(0,0,0,.6)"></div>
<div class="a" style="left:1179px;top:660px;width:536px;height:170px;background:#0f1111;overflow:hidden">
<div class="m" style="position:absolute;left:2.6px;top:4.5px;font-size:15px;line-height:20px;color:#78d696">fffffffffffffff8</div>
<div class="m" style="position:absolute;left:164.6px;top:4.5px;font-size:15px;line-height:20px;color:#cfcac2">?? ?? ?? ?? ?? ?? ??</div>
<div class="m" style="position:absolute;left:389.6px;top:4.5px;font-size:15px;line-height:20px;color:#cfcac2">???????</div>
<svg style="position:absolute;left:0;top:31px" width="540" height="3"><path d="M0 1.5H540" stroke="#d8d0c4" stroke-width="2" stroke-dasharray="9.5 2.5"/></svg>
<div class="m" style="position:absolute;left:2.6px;top:44.5px;font-size:15px;line-height:20px;color:#78d696">0000555555400932</div>
<div style="position:absolute;left:214.1px;top:42px;width:27.0px;height:20px;background:rgb(55,59,60)"></div>
<div class="m" style="position:absolute;left:218.6px;top:44.5px;font-size:15px;line-height:20px;color:#dcd8d0">e8</div>
<div style="position:absolute;left:241.1px;top:42px;width:27.0px;height:20px;background:rgb(29,33,34)"></div>
<div class="m" style="position:absolute;left:245.6px;top:44.5px;font-size:15px;line-height:20px;color:#90a4e4">55</div>
<div style="position:absolute;left:268.1px;top:42px;width:27.0px;height:20px;background:rgb(58,62,63)"></div>
<div class="m" style="position:absolute;left:272.6px;top:44.5px;font-size:15px;line-height:20px;color:#dcd8d0">fe</div>
<div style="position:absolute;left:295.1px;top:42px;width:27.0px;height:20px;background:rgb(59,63,64)"></div>
<div class="m" style="position:absolute;left:299.6px;top:44.5px;font-size:15px;line-height:20px;color:#dcd8d0">ff</div>
<div style="position:absolute;left:322.1px;top:42px;width:27.0px;height:20px;background:rgb(59,63,64)"></div>
<div class="m" style="position:absolute;left:326.6px;top:44.5px;font-size:15px;line-height:20px;color:#dcd8d0">ff</div>
<div style="position:absolute;left:349.1px;top:42px;width:27.0px;height:20px;background:rgb(27,31,32)"></div>
<div class="m" style="position:absolute;left:353.6px;top:44.5px;font-size:15px;line-height:20px;color:#90a4e4">48</div>
<div class="m" style="position:absolute;left:389.6px;top:44.5px;font-size:15px;line-height:20px">  <span style="color:#dcd8d0">.</span><span style="color:#90a4e4">U</span><span style="color:#dcd8d0">.</span><span style="color:#dcd8d0">.</span><span style="color:#dcd8d0">.</span><span style="color:#90a4e4">H</span></div>
<div class="m" style="position:absolute;left:2.6px;top:64.5px;font-size:15px;line-height:20px;color:#78d696">0000555555400938</div>
<div style="position:absolute;left:160.1px;top:62px;width:27.0px;height:20px;background:rgb(38,42,43)"></div>
<div class="m" style="position:absolute;left:164.6px;top:64.5px;font-size:15px;line-height:20px;color:#dcd8d0">89</div>
<div style="position:absolute;left:187.1px;top:62px;width:27.0px;height:20px;background:rgb(53,57,58)"></div>
<div class="m" style="position:absolute;left:191.6px;top:64.5px;font-size:15px;line-height:20px;color:#dcd8d0">df</div>
<div style="position:absolute;left:214.1px;top:62px;width:27.0px;height:20px;background:rgb(55,59,60)"></div>
<div class="m" style="position:absolute;left:218.6px;top:64.5px;font-size:15px;line-height:20px;color:#dcd8d0">e8</div>
<div style="position:absolute;left:241.1px;top:62px;width:27.0px;height:20px;background:rgb(51,55,56)"></div>
<div class="m" style="position:absolute;left:245.6px;top:64.5px;font-size:15px;line-height:20px;color:#dcd8d0">d1</div>
<div style="position:absolute;left:268.1px;top:62px;width:27.0px;height:20px;background:rgb(58,62,63)"></div>
<div class="m" style="position:absolute;left:272.6px;top:64.5px;font-size:15px;line-height:20px;color:#dcd8d0">fc</div>
<div style="position:absolute;left:295.1px;top:62px;width:27.0px;height:20px;background:rgb(59,63,64)"></div>
<div class="m" style="position:absolute;left:299.6px;top:64.5px;font-size:15px;line-height:20px;color:#dcd8d0">ff</div>
<div style="position:absolute;left:322.1px;top:62px;width:27.0px;height:20px;background:rgb(59,63,64)"></div>
<div class="m" style="position:absolute;left:326.6px;top:64.5px;font-size:15px;line-height:20px;color:#dcd8d0">ff</div>
<div style="position:absolute;left:349.1px;top:62px;width:27.0px;height:20px;background:rgb(55,59,60)"></div>
<div class="m" style="position:absolute;left:353.6px;top:64.5px;font-size:15px;line-height:20px;color:#dcd8d0">e9</div>
<div class="m" style="position:absolute;left:389.6px;top:64.5px;font-size:15px;line-height:20px"><span style="color:#dcd8d0">.</span><span style="color:#dcd8d0">.</span><span style="color:#dcd8d0">.</span><span style="color:#dcd8d0">.</span><span style="color:#dcd8d0">.</span><span style="color:#dcd8d0">.</span><span style="color:#dcd8d0">.</span><span style="color:#dcd8d0">.</span></div>
<div class="m" style="position:absolute;left:2.6px;top:84.5px;font-size:15px;line-height:20px;color:#78d696">0000555555400940</div>
<div style="position:absolute;left:160.1px;top:82px;width:27.0px;height:20px;background:rgb(32,36,37)"></div>
<div class="m" style="position:absolute;left:164.6px;top:84.5px;font-size:15px;line-height:20px;color:#90a4e4">68</div>
<div style="position:absolute;left:187.1px;top:82px;width:27.0px;height:20px;background:rgb(59,63,64)"></div>
<div class="m" style="position:absolute;left:191.6px;top:84.5px;font-size:15px;line-height:20px;color:#dcd8d0">ff</div>
<div style="position:absolute;left:214.1px;top:82px;width:27.0px;height:20px;background:rgb(59,63,64)"></div>
<div class="m" style="position:absolute;left:218.6px;top:84.5px;font-size:15px;line-height:20px;color:#dcd8d0">ff</div>
<div style="position:absolute;left:241.1px;top:82px;width:27.0px;height:20px;background:rgb(59,63,64)"></div>
<div class="m" style="position:absolute;left:245.6px;top:84.5px;font-size:15px;line-height:20px;color:#dcd8d0">ff</div>
<div style="position:absolute;left:268.1px;top:82px;width:27.0px;height:20px;background:rgb(55,59,60)"></div>
<div class="m" style="position:absolute;left:272.6px;top:84.5px;font-size:15px;line-height:20px;color:#dcd8d0">e8</div>
<div style="position:absolute;left:295.1px;top:82px;width:27.0px;height:20px;background:rgb(52,56,57)"></div>
<div class="m" style="position:absolute;left:299.6px;top:84.5px;font-size:15px;line-height:20px;color:#dcd8d0">d7</div>
<div style="position:absolute;left:322.1px;top:82px;width:27.0px;height:20px;background:rgb(58,62,63)"></div>
<div class="m" style="position:absolute;left:326.6px;top:84.5px;font-size:15px;line-height:20px;color:#dcd8d0">fc</div>
<div style="position:absolute;left:349.1px;top:82px;width:27.0px;height:20px;background:rgb(59,63,64)"></div>
<div class="m" style="position:absolute;left:353.6px;top:84.5px;font-size:15px;line-height:20px;color:#dcd8d0">ff</div>
<div class="m" style="position:absolute;left:389.6px;top:84.5px;font-size:15px;line-height:20px"><span style="color:#90a4e4">h</span><span style="color:#dcd8d0">.</span><span style="color:#dcd8d0">.</span><span style="color:#dcd8d0">.</span><span style="color:#dcd8d0">.</span><span style="color:#dcd8d0">.</span><span style="color:#dcd8d0">.</span><span style="color:#dcd8d0">.</span></div>
<div class="m" style="position:absolute;left:2.6px;top:104.5px;font-size:15px;line-height:20px;color:#78d696">0000555555400948</div>
<div style="position:absolute;left:160.1px;top:102px;width:27.0px;height:20px;background:rgb(59,63,64)"></div>
<div class="m" style="position:absolute;left:164.6px;top:104.5px;font-size:15px;line-height:20px;color:#dcd8d0">ff</div>
<div style="position:absolute;left:187.1px;top:102px;width:27.0px;height:20px;background:rgb(17,21,22)"></div>
<div class="m" style="position:absolute;left:191.6px;top:104.5px;font-size:15px;line-height:20px;color:#dcd8d0">0f</div>
<div style="position:absolute;left:214.1px;top:102px;width:27.0px;height:20px;background:rgb(20,24,25)"></div>
<div class="m" style="position:absolute;left:218.6px;top:104.5px;font-size:15px;line-height:20px;color:#dcd8d0">1f</div>
<div style="position:absolute;left:241.1px;top:102px;width:27.0px;height:20px;background:rgb(37,41,42)"></div>
<div class="m" style="position:absolute;left:245.6px;top:104.5px;font-size:15px;line-height:20px;color:#dcd8d0">80</div>
<div style="position:absolute;left:268.1px;top:102px;width:27.0px;height:20px;background:rgb(15,19,20)"></div>
<div class="m" style="position:absolute;left:272.6px;top:104.5px;font-size:15px;line-height:20px;color:#dcd8d0">00</div>
<div style="position:absolute;left:295.1px;top:102px;width:27.0px;height:20px;background:rgb(15,19,20)"></div>
<div class="m" style="position:absolute;left:299.6px;top:104.5px;font-size:15px;line-height:20px;color:#dcd8d0">00</div>
<div style="position:absolute;left:322.1px;top:102px;width:27.0px;height:20px;background:rgb(15,19,20)"></div>
<div class="m" style="position:absolute;left:326.6px;top:104.5px;font-size:15px;line-height:20px;color:#dcd8d0">00</div>
<div style="position:absolute;left:349.1px;top:102px;width:27.0px;height:20px;background:rgb(15,19,20)"></div>
<div class="m" style="position:absolute;left:353.6px;top:104.5px;font-size:15px;line-height:20px;color:#dcd8d0">00</div>
<div class="m" style="position:absolute;left:389.6px;top:104.5px;font-size:15px;line-height:20px"><span style="color:#dcd8d0">.</span><span style="color:#dcd8d0">.</span><span style="color:#dcd8d0">.</span><span style="color:#dcd8d0">.</span><span style="color:#dcd8d0">.</span><span style="color:#dcd8d0">.</span><span style="color:#dcd8d0">.</span><span style="color:#dcd8d0">.</span></div>
<div class="m" style="position:absolute;left:2.6px;top:124.5px;font-size:15px;line-height:20px;color:#78d696">0000555555400950</div>
<div style="position:absolute;left:160.1px;top:122px;width:27.0px;height:20px;background:rgb(26,30,31)"></div>
<div class="m" style="position:absolute;left:164.6px;top:124.5px;font-size:15px;line-height:20px;color:#90a4e4">41</div>
<div style="position:absolute;left:187.1px;top:122px;width:27.0px;height:20px;background:rgb(30,34,35)"></div>
<div class="m" style="position:absolute;left:191.6px;top:124.5px;font-size:15px;line-height:20px;color:#90a4e4">57</div>
<div style="position:absolute;left:214.1px;top:122px;width:27.0px;height:20px;background:rgb(27,31,32)"></div>
<div class="m" style="position:absolute;left:218.6px;top:124.5px;font-size:15px;line-height:20px;color:#90a4e4">49</div>
<div style="position:absolute;left:241.1px;top:122px;width:27.0px;height:20px;background:rgb(38,42,43)"></div>
<div class="m" style="position:absolute;left:245.6px;top:124.5px;font-size:15px;line-height:20px;color:#dcd8d0">89</div>
<div style="position:absolute;left:268.1px;top:122px;width:27.0px;height:20px;background:rgb(52,56,57)"></div>
<div class="m" style="position:absolute;left:272.6px;top:124.5px;font-size:15px;line-height:20px;color:#dcd8d0">d7</div>
<div style="position:absolute;left:295.1px;top:122px;width:27.0px;height:20px;background:rgb(26,30,31)"></div>
<div class="m" style="position:absolute;left:299.6px;top:124.5px;font-size:15px;line-height:20px;color:#90a4e4">41</div>
<div style="position:absolute;left:322.1px;top:122px;width:27.0px;height:20px;background:rgb(29,33,34)"></div>
<div class="m" style="position:absolute;left:326.6px;top:124.5px;font-size:15px;line-height:20px;color:#90a4e4">56</div>
<div style="position:absolute;left:349.1px;top:122px;width:27.0px;height:20px;background:rgb(27,31,32)"></div>
<div class="m" style="position:absolute;left:353.6px;top:124.5px;font-size:15px;line-height:20px;color:#90a4e4">49</div>
<div class="m" style="position:absolute;left:389.6px;top:124.5px;font-size:15px;line-height:20px"><span style="color:#90a4e4">A</span><span style="color:#90a4e4">W</span><span style="color:#90a4e4">I</span><span style="color:#dcd8d0">.</span><span style="color:#dcd8d0">.</span><span style="color:#90a4e4">A</span><span style="color:#90a4e4">V</span><span style="color:#90a4e4">I</span></div>
<div class="m" style="position:absolute;left:2.6px;top:144.5px;font-size:15px;line-height:20px;color:#78d696">0000555555400958</div>
<div style="position:absolute;left:160.1px;top:142px;width:27.0px;height:20px;background:rgb(38,42,43)"></div>
<div class="m" style="position:absolute;left:164.6px;top:144.5px;font-size:15px;line-height:20px;color:#dcd8d0">89</div>
<div style="position:absolute;left:187.1px;top:142px;width:27.0px;height:20px;background:rgb(57,61,62)"></div>
<div class="m" style="position:absolute;left:191.6px;top:144.5px;font-size:15px;line-height:20px;color:#dcd8d0">f6</div>
<div style="position:absolute;left:214.1px;top:142px;width:27.0px;height:20px;background:rgb(26,30,31)"></div>
<div class="m" style="position:absolute;left:218.6px;top:144.5px;font-size:15px;line-height:20px;color:#90a4e4">41</div>
<div style="position:absolute;left:241.1px;top:142px;width:27.0px;height:20px;background:rgb(29,33,34)"></div>
<div class="m" style="position:absolute;left:245.6px;top:144.5px;font-size:15px;line-height:20px;color:#90a4e4">55</div>
<div style="position:absolute;left:268.1px;top:142px;width:27.0px;height:20px;background:rgb(26,30,31)"></div>
<div class="m" style="position:absolute;left:272.6px;top:144.5px;font-size:15px;line-height:20px;color:#90a4e4">41</div>
<div style="position:absolute;left:295.1px;top:142px;width:27.0px;height:20px;background:rgb(38,42,43)"></div>
<div class="m" style="position:absolute;left:299.6px;top:144.5px;font-size:15px;line-height:20px;color:#dcd8d0">89</div>
<div style="position:absolute;left:322.1px;top:142px;width:27.0px;height:20px;background:rgb(58,62,63)"></div>
<div class="m" style="position:absolute;left:326.6px;top:144.5px;font-size:15px;line-height:20px;color:#dcd8d0">fd</div>
<div style="position:absolute;left:349.1px;top:142px;width:27.0px;height:20px;background:rgb(26,30,31)"></div>
<div class="m" style="position:absolute;left:353.6px;top:144.5px;font-size:15px;line-height:20px;color:#90a4e4">41</div>
<div class="m" style="position:absolute;left:389.6px;top:144.5px;font-size:15px;line-height:20px"><span style="color:#dcd8d0">.</span><span style="color:#dcd8d0">.</span><span style="color:#90a4e4">A</span><span style="color:#90a4e4">U</span><span style="color:#90a4e4">A</span><span style="color:#dcd8d0">.</span><span style="color:#dcd8d0">.</span><span style="color:#90a4e4">A</span></div>
<div class="m" style="position:absolute;left:2.6px;top:164.5px;font-size:15px;line-height:20px;color:#78d696">0000555555400960</div>
<div style="position:absolute;left:160.1px;top:162px;width:27.0px;height:20px;background:rgb(29,33,34)"></div>
<div class="m" style="position:absolute;left:164.6px;top:164.5px;font-size:15px;line-height:20px;color:#90a4e4">54</div>
<div style="position:absolute;left:187.1px;top:162px;width:27.0px;height:20px;background:rgb(28,32,33)"></div>
<div class="m" style="position:absolute;left:191.6px;top:164.5px;font-size:15px;line-height:20px;color:#90a4e4">4c</div>
<div style="position:absolute;left:214.1px;top:162px;width:27.0px;height:20px;background:rgb(39,43,44)"></div>
<div class="m" style="position:absolute;left:218.6px;top:164.5px;font-size:15px;line-height:20px;color:#dcd8d0">8d</div>
<div style="position:absolute;left:241.1px;top:162px;width:27.0px;height:20px;background:rgb(21,25,26)"></div>
<div class="m" style="position:absolute;left:245.6px;top:164.5px;font-size:15px;line-height:20px;color:#7ed6d6">25</div>
<div style="position:absolute;left:268.1px;top:162px;width:27.0px;height:20px;background:rgb(20,24,25)"></div>
<div class="m" style="position:absolute;left:272.6px;top:164.5px;font-size:15px;line-height:20px;color:#90a4e4">20</div>
<div style="position:absolute;left:295.1px;top:162px;width:27.0px;height:20px;background:rgb(15,19,20)"></div>
<div class="m" style="position:absolute;left:299.6px;top:164.5px;font-size:15px;line-height:20px;color:#dcd8d0">04</div>
<div style="position:absolute;left:322.1px;top:162px;width:27.0px;height:20px;background:rgb(20,24,25)"></div>
<div class="m" style="position:absolute;left:326.6px;top:164.5px;font-size:15px;line-height:20px;color:#90a4e4">20</div>
<div style="position:absolute;left:349.1px;top:162px;width:27.0px;height:20px;background:rgb(15,19,20)"></div>
<div class="m" style="position:absolute;left:353.6px;top:164.5px;font-size:15px;line-height:20px;color:#dcd8d0">00</div>
<div class="m" style="position:absolute;left:389.6px;top:164.5px;font-size:15px;line-height:20px"><span style="color:#90a4e4">T</span><span style="color:#90a4e4">L</span><span style="color:#dcd8d0">.</span><span style="color:#90a4e4">%</span> <span style="color:#dcd8d0">.</span> <span style="color:#dcd8d0">.</span></div>
<div style="position:absolute;left:215.1px;top:42px;width:23.0px;height:20px;border:1px solid #8a8c8c"></div>
<div style="position:absolute;left:406.6px;top:42px;width:10px;height:20px;border:1px solid #8a8c8c"></div>
</div>
<div class="a" style="left:1715px;top:660px;width:14px;height:170px;background:#45494b"></div>
<div class="a" style="left:1716px;top:661px;width:12px;height:13px;background:#55595b"></div>
<svg class="a" style="left:1718px;top:664px" width="8" height="6" viewBox="0 0 8 6"><path d="M0 6L4 0L8 6Z" fill="#8c8a86"/></svg>
<div class="a" style="left:1716px;top:790px;width:12px;height:25px;background:#55595b"></div>
<div class="a" style="left:1716px;top:817px;width:12px;height:13px;background:#55595b"></div>
<svg class="a" style="left:1718px;top:820px" width="8" height="6" viewBox="0 0 8 6"><path d="M0 0L8 0L4 6Z" fill="#8c8a86"/></svg>
<div class="a" style="left:2447px;top:60px;width:5px;height:1044px;background:#383c3d"></div>
<div class="a" style="left:2452px;top:61px;width:64px;height:1043px;background:#000"></div>
<div class="a" style="left:2452px;top:62px;width:64px;height:4px;background:#e8e4de"></div>
<div class="a" style="left:2452px;top:63px;width:64px;height:1px;background:#333"></div>
<div class="a" style="left:2457px;top:62px;width:5px;height:1042px;background:#e6e2dc"></div>
<div class="a" style="left:2463px;top:62px;width:3px;height:1042px;background:#eeeae4"></div>
<svg class="a" style="left:2000px;top:0" width="556" height="1436"><path d="M529 71.5C526.8 74.5 526 77.5 526 81C526 84.5 526.8 87.5 529 90.5M543 71.5C545.2 74.5 546 77.5 546 81C546 84.5 545.2 87.5 543 90.5" stroke="#9a948c" stroke-width="1.5" fill="none" stroke-linecap="round"/><path d="M531.5 76.8C533 76.2 534 76.8 535 79.5L536.5 83.5C537.3 85.5 538.5 86.2 540.3 85.6M540.5 76.6C538.5 77.5 535.5 82 533.5 84.5C532.8 85.4 532 85.8 530.8 85.4" stroke="#9a948c" stroke-width="1.5" fill="none"/><path d="M536 110.8L546.5 116.3L536 121.8L525.5 116.3ZM525.5 120.7L536 126.2L546.5 120.7M525.5 125.2L536 130.7L546.5 125.2" stroke="#9a948c" stroke-width="1.5" fill="none" stroke-linejoin="round"/><path d="M530 1142.8A3.7 3.7 0 0 1 533.8 1147C533.8 1151 531.5 1154.3 527.3 1155.6L526.5 1154.6C528.5 1153.3 529.5 1151.8 529.8 1150.3A3.6 3.6 0 0 1 530 1142.8ZM541 1142.8A3.7 3.7 0 0 1 544.8 1147C544.8 1151 542.5 1154.3 538.3 1155.6L537.5 1154.6C539.5 1153.3 540.5 1151.8 540.8 1150.3A3.6 3.6 0 0 1 541 1142.8Z" stroke="#9a948c" stroke-width="1.5" fill="none" stroke-linejoin="round"/><circle cx="535" cy="1187.8" r="7.2" stroke="#9a948c" stroke-width="1.6" fill="none"/><path d="M540.2 1193L544.8 1197.6" stroke="#9a948c" stroke-width="1.7"/><path d="M527 1220.8H545M527 1224.8H545M527 1228.8H540M527 1232.8H543M527 1236.8H537" stroke="#9a948c" stroke-width="1.8"/><path d="M527.2 1264.5A10 10 0 1 1 526.5 1273.5M526.5 1258.5V1264.8H532.5M536 1263V1270L540 1273.5" stroke="#9a948c" stroke-width="1.6" fill="none"/><rect x="526.3" y="1299.8" width="8" height="7.8" rx="2" stroke="#9a948c" stroke-width="1.5" fill="none"/><rect x="537.5" y="1299.8" width="8" height="7.8" rx="2" stroke="#9a948c" stroke-width="1.5" fill="none"/><rect x="526.3" y="1310.5" width="8" height="7.8" rx="2" stroke="#9a948c" stroke-width="1.5" fill="none"/><rect x="538.8" y="1311" width="6.5" height="7.5" rx="3" transform="rotate(-40 542 1314.8)" stroke="#9a948c" stroke-width="1.5" fill="none"/><path d="M537 1310.5L538.5 1312M547 1310.5L545.5 1312M536.5 1315H538M547.5 1315H546M537 1319.5L538.5 1318M547 1319.5L545.5 1318" stroke="#9a948c" stroke-width="1.2"/><path d="M536 1339L546 1344L536 1349L526 1344ZM526 1347.5L536 1352.5L546 1347.5M529 1354.3H545M533 1357.8H545" stroke="#9a948c" stroke-width="1.5" fill="none" stroke-linejoin="round"/><path d="M525.8 1400V1378.8H545.8V1389.5H534.3V1396.2H525.8M545.8 1380.5L540.8 1388.8M536.5 1381.2H539.5" stroke="#9a948c" stroke-width="1.6" fill="none"/></svg>
<div class="a" style="left:1487px;top:1106px;width:2px;height:2px;background:#8a8c8c"></div>
<div class="a" style="left:1490px;top:1106px;width:2px;height:2px;background:#8a8c8c"></div>
<div class="a" style="left:1493px;top:1106px;width:2px;height:2px;background:#8a8c8c"></div>
<div class="a" style="left:1496px;top:1106px;width:2px;height:2px;background:#8a8c8c"></div>
<div class="a" style="left:1499px;top:1106px;width:2px;height:2px;background:#8a8c8c"></div>
<div class="a" style="left:1502px;top:1106px;width:2px;height:2px;background:#8a8c8c"></div>
<div class="a s" style="left:482px;top:1118px;font-size:18.3px;letter-spacing:0.3px;line-height:22px;color:#e2ded8">Console</div>
<div class="a s" style="left:566px;top:1120px;font-size:15.5px;letter-spacing:0.3px;line-height:20px;color:#8c8882">Debugger</div>
<div class="a s" style="left:660px;top:1120px;font-size:15.5px;letter-spacing:0.3px;line-height:20px;color:#e2ded8">Target</div>
<div class="a" style="left:656px;top:1143px;width:52px;height:2px;background:#a8a4a0"></div>
<div class="a" style="left:473px;top:1146px;width:2042px;height:228px;background:#101212"></div>
<div class="a m" style="left:477px;top:1152.5px;font-size:15px;line-height:20px;color:#dcd8d0">Input method: &lt;appname&gt; &lt;password&gt;Input method: &lt;appname&gt; &lt;password&gt;Input method: &lt;appname&gt; &lt;password&gt;Input method: &lt;appname&gt; &lt;password&gt;You have failed...You have failed...</div>
<div class="a" style="left:1487px;top:1376px;width:2px;height:2px;background:#8a8c8c"></div>
<div class="a" style="left:1490px;top:1376px;width:2px;height:2px;background:#8a8c8c"></div>
<div class="a" style="left:1493px;top:1376px;width:2px;height:2px;background:#8a8c8c"></div>
<div class="a" style="left:1496px;top:1376px;width:2px;height:2px;background:#8a8c8c"></div>
<div class="a" style="left:1499px;top:1376px;width:2px;height:2px;background:#8a8c8c"></div>
<div class="a" style="left:1502px;top:1376px;width:2px;height:2px;background:#8a8c8c"></div>
<div class="a m" style="left:476px;top:1387.5px;font-size:15px;line-height:20px;color:#dcd8d0">&gt;&gt;&gt;</div>
<div class="a" style="left:519px;top:1380px;width:1996px;height:28px;background:#101212"></div>
<svg class="a" style="left:9px;top:1416px" width="12" height="12" viewBox="0 0 12 12"><path d="M2 2L10 10M10 2L2 10" stroke="#e2ded8" stroke-width="2.6"/></svg>
<div class="a s" style="left:27px;top:1412px;font-size:15.5px;letter-spacing:0.3px;line-height:20px;color:#e2ded8">Analysis Hold</div>
<div class="a s" style="left:130px;top:1412px;font-size:15.5px;letter-spacing:0.12px;line-height:20px;color:#e2ded8">Stopped (SingleStep)</div>
<svg class="a" style="left:1900px;top:1416px" width="14" height="14" viewBox="0 0 14 14"><circle cx="7" cy="7" r="6.5" fill="#e0303a"/><path d="M4.5 4.5L9.5 9.5M9.5 4.5L4.5 9.5" stroke="#3a1a1a" stroke-width="1.6"/></svg>
<div class="a s" style="left:1916px;top:1412px;font-size:15.5px;letter-spacing:0.3px;line-height:20px;color:#e2ded8">2</div>
<svg class="a" style="left:1946px;top:1416px" width="14" height="13" viewBox="0 0 14 13"><path d="M7 0.5L13.5 12.5H0.5Z" fill="#f2c12e"/><path d="M7 4.5V8.5M7 9.8V11.2" stroke="#383c3d" stroke-width="1.4"/></svg>
<div class="a s" style="left:1963px;top:1412px;font-size:15.5px;letter-spacing:0.3px;line-height:20px;color:#e2ded8">26</div>
<div class="a s" style="left:2014px;top:1412px;font-size:15.5px;letter-spacing:0.3px;line-height:20px;color:#e2ded8">linux-x86_64</div>
<div class="a s" style="left:2128px;top:1412px;font-size:15.5px;letter-spacing:0.5px;line-height:20px;color:#e2ded8">0x555555400932–0x555555400937 (0x5 bytes)</div>
<svg class="a" style="left:2500px;top:1414px" width="14" height="16" viewBox="0 0 14 16"><rect x="1.5" y="7" width="11" height="8" rx="1.5" stroke="#e2ded8" stroke-width="1.5" fill="none"/><path d="M4 7V4.5A3 3 0 0 1 10 4.5V7" stroke="#e2ded8" stroke-width="1.5" fill="none"/></svg>
<div class="a" style="left:470px;top:728px;width:2px;height:2px;background:#8a8c8c"></div>
<div class="a" style="left:470px;top:731px;width:2px;height:2px;background:#8a8c8c"></div>
<div class="a" style="left:470px;top:734px;width:2px;height:2px;background:#8a8c8c"></div>
<div class="a" style="left:470px;top:737px;width:2px;height:2px;background:#8a8c8c"></div>
<div class="a" style="left:470px;top:740px;width:2px;height:2px;background:#8a8c8c"></div>
<div class="a" style="left:470px;top:743px;width:2px;height:2px;background:#8a8c8c"></div>
<div class="a" style="left:2450px;top:576px;width:2px;height:2px;background:#8a8a88"></div>
<div class="a" style="left:2450px;top:579px;width:2px;height:2px;background:#8a8a88"></div>
<div class="a" style="left:2450px;top:582px;width:2px;height:2px;background:#8a8a88"></div>
<div class="a" style="left:2450px;top:585px;width:2px;height:2px;background:#8a8a88"></div>
<div class="a" style="left:2450px;top:588px;width:2px;height:2px;background:#8a8a88"></div>
<div class="a" style="left:2450px;top:591px;width:2px;height:2px;background:#8a8a88"></div>
<div class="a" style="left:2552px;top:1423px;width:2px;height:2px;background:#6a6e70"></div>
<div class="a" style="left:2549px;top:1426px;width:2px;height:2px;background:#6a6e70"></div>
<div class="a" style="left:2552px;top:1426px;width:2px;height:2px;background:#6a6e70"></div>
<div class="a" style="left:2546px;top:1429px;width:2px;height:2px;background:#6a6e70"></div>
<div class="a" style="left:2549px;top:1429px;width:2px;height:2px;background:#6a6e70"></div>
<div class="a" style="left:2552px;top:1429px;width:2px;height:2px;background:#6a6e70"></div>
<div class="a" style="left:2543px;top:1432px;width:2px;height:2px;background:#6a6e70"></div>
<div class="a" style="left:2546px;top:1432px;width:2px;height:2px;background:#6a6e70"></div>
<div class="a" style="left:2549px;top:1432px;width:2px;height:2px;background:#6a6e70"></div>
</div>
<svg class="a" style="left:0;top:0" width="2556" height="1436"><path d="M0 0H8A8 8 0 0 0 0 8Z" fill="#0b0c0c"/><path d="M0.8 8A7.2 7.2 0 0 1 8 0.8" stroke="#d8d6d2" stroke-width="1.3" fill="none"/><path d="M2556 0H2548A8 8 0 0 1 2556 8Z" fill="#0b0c0c"/><path d="M2548 0.8A7.2 7.2 0 0 1 2555.2 8" stroke="#d8d6d2" stroke-width="1.3" fill="none"/><path d="M0 1436H8A8 8 0 0 1 0 1428Z" fill="#0b0c0c"/><path d="M0.8 1428A7.2 7.2 0 0 0 8 1435.2" stroke="#d8d6d2" stroke-width="1.3" fill="none"/><path d="M2556 1436H2548A8 8 0 0 0 2556 1428Z" fill="#0b0c0c"/><path d="M2548 1435.2A7.2 7.2 0 0 0 2555.2 1428" stroke="#d8d6d2" stroke-width="1.3" fill="none"/></svg>
<div class="a" style="left:0;top:0;width:2556px;height:1px;background:#1c1e1f"></div>
<div class="a" style="left:2555px;top:0;width:1px;height:1436px;background:#1c1e1f"></div>
<div class="a" style="left:0;top:1435px;width:2556px;height:1px;background:#1c1e1f"></div>
</body></html>
